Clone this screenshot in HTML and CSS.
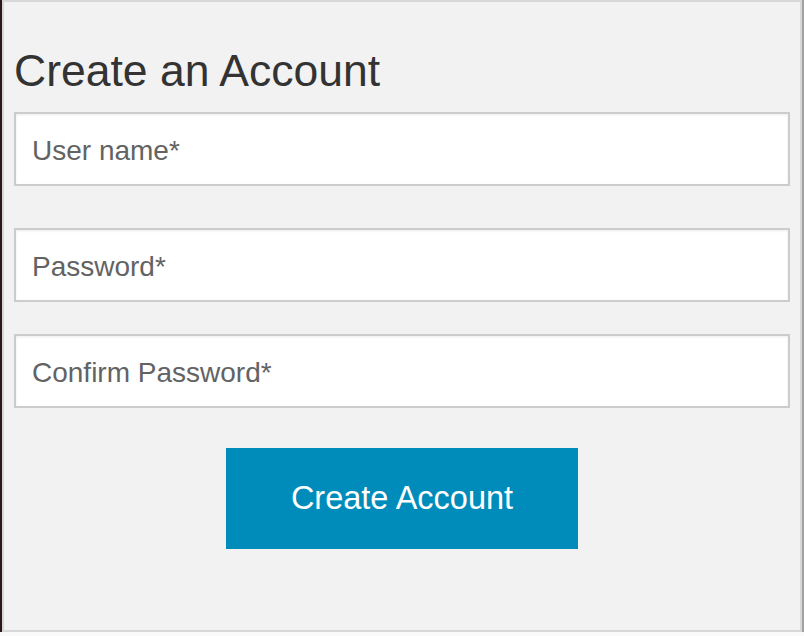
FILE: index.html
```html
<!DOCTYPE html>
<html lang="en">
<head>
<meta charset="utf-8">
<title>Create an Account</title>
<link rel="stylesheet" href="styles.css">
</head>
<body>
<div class="frame">
  <div class="edge-left"></div>
  <div class="panel">
    <h1 class="title">Create an Account</h1>
    <form class="form">
      <input class="field field-user" type="text" placeholder="User name*">
      <input class="field field-pass" type="password" placeholder="Password*">
      <input class="field field-confirm" type="password" placeholder="Confirm Password*">
      <div class="actions">
        <button class="btn" type="button">Create Account</button>
      </div>
    </form>
  </div>
  <div class="edge-right"></div>
</div>
<div class="below"></div>
</body>
</html>
```

FILE: styles.css
```css
html, body {
  margin: 0;
  padding: 0;
  background: #fafafa;
  font-family: "Liberation Sans", Arial, sans-serif;
}

.frame {
  display: flex;
  height: 632px;
}

.edge-left {
  width: 2px;
  background: #2b1618;
  flex: none;
}

.edge-right {
  width: 2px;
  background: #a2a2a2;
  flex: none;
}

.panel {
  box-sizing: border-box;
  width: 800px;
  height: 632px;
  flex: none;
  background: #f2f2f2;
  border: 2px solid #d7d7d7;
  padding: 43px 10px 0 10px;
}

.title {
  margin: 0;
  font-size: 44.5px;
  line-height: 52px;
  font-weight: normal;
  color: #333333;
}

.form {
  display: flex;
  flex-direction: column;
  margin-top: 15px;
}

.field {
  box-sizing: border-box;
  width: 100%;
  height: 74px;
  margin: 0;
  border: 2px solid #cccccc;
  background: #ffffff;
  box-shadow: inset 0 1px 3px rgba(0, 0, 0, 0.08);
  padding: 3px 15px 0 16px;
  font-family: "Liberation Sans", Arial, sans-serif;
  font-size: 28px;
  color: #636363;
  outline: none;
}

.field::placeholder {
  color: #636363;
  opacity: 1;
}

.field-pass {
  margin-top: 42px;
}

.field-confirm {
  margin-top: 32px;
}

.actions {
  display: flex;
  justify-content: center;
  margin-top: 40px;
}

.btn {
  width: 352px;
  height: 101px;
  border: none;
  background: #008cba;
  color: #ffffff;
  font-family: "Liberation Sans", Arial, sans-serif;
  font-size: 32.5px;
  padding: 0;
  cursor: pointer;
}

.below {
  height: 4px;
  background: #fafafa;
}
```
